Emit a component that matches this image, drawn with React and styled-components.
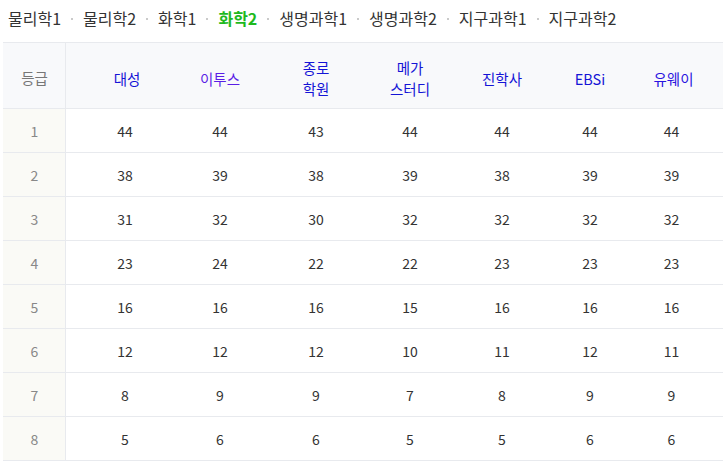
import React from "react";
import styled, { createGlobalStyle } from "styled-components";

const Global = createGlobalStyle`
  html, body { margin: 0; padding: 0; background: #fff; }
  body { font-family: "Noto Sans CJK KR", "Noto Sans", sans-serif; }
`;

const Page = styled.div`
  width: 723px;
`;

const Tabs = styled.nav`
  display: flex;
  align-items: center;
  height: 42px;
  box-sizing: border-box;
  padding: 7px 0 13px 8px;
  font-size: 16px;
  line-height: 22px;
`;

const Tab = styled.span`
  color: ${(p) => (p.$active ? "#1eb91e" : "#333")};
  font-weight: ${(p) => (p.$active ? 700 : 400)};
  white-space: nowrap;
`;

const Dot = styled.span`
  width: 2px;
  height: 2px;
  border-radius: 1px;
  background: #b8b8b8;
  margin: 2px 10px 0;
  flex: none;
`;

const Table = styled.div`
  margin-left: 3px;
  width: 720px;
  border-top: 1px solid #e8eaee;
  font-size: 14px;
`;

const cols = "63px 106px 96px 96px 92px 92px 84px 91px";

const Row = styled.div`
  display: grid;
  grid-template-columns: ${cols};
  height: ${(p) => (p.$head ? "66px" : "44px")};
  box-sizing: border-box;
  border-bottom: 1px solid #e8eaee;
  background: ${(p) => (p.$head ? "#f8f9fb" : "#fff")};
`;

const GradeCell = styled.div`
  display: flex;
  align-items: center;
  justify-content: center;
  border-right: 1px solid #e8eaee;
  background: ${(p) => (p.$head ? "#f8f9fb" : "#fafaf6")};
  color: ${(p) => (p.$head ? "#777" : "#888")};
  padding-left: 1px;
  padding-top: ${(p) => (p.$head ? "4px" : "0")};
  font-size: ${(p) => (p.$head ? "14.5px" : "14px")};
`;

const HeadCell = styled.div`
  display: flex;
  align-items: center;
  justify-content: center;
  text-align: center;
  line-height: 21px;
  font-size: 14.5px;
  color: ${(p) => p.$color || "#1414d6"};
  padding-left: ${(p) => (p.$first ? "16px" : "0")};
  padding-right: ${(p) => (p.$last ? "8px" : "0")};
  padding-top: 5px;
`;

const Cell = styled.div`
  display: flex;
  align-items: center;
  justify-content: center;
  color: #333;
  padding-left: ${(p) => (p.$first ? "12px" : "0")};
  padding-right: ${(p) => (p.$last ? "12px" : "0")};
  padding-top: 1px;
`;

const tabs = ["물리학1", "물리학2", "화학1", "화학2", "생명과학1", "생명과학2", "지구과학1", "지구과학2"];

const heads = [
  { label: ["대성"] },
  { label: ["이투스"], color: "#5a1de6" },
  { label: ["종로", "학원"] },
  { label: ["메가", "스터디"] },
  { label: ["진학사"] },
  { label: ["EBSi"] },
  { label: ["유웨이"], color: "#2a14e0" },
];

const data = [
  [44, 44, 43, 44, 44, 44, 44],
  [38, 39, 38, 39, 38, 39, 39],
  [31, 32, 30, 32, 32, 32, 32],
  [23, 24, 22, 22, 23, 23, 23],
  [16, 16, 16, 15, 16, 16, 16],
  [12, 12, 12, 10, 11, 12, 11],
  [8, 9, 9, 7, 8, 9, 9],
  [5, 6, 6, 5, 5, 6, 6],
];

export default function App() {
  return (
    <Page>
      <Global />
      <Tabs>
        {tabs.map((t, i) => (
          <React.Fragment key={t}>
            {i > 0 && <Dot />}
            <Tab $active={t === "화학2"}>{t}</Tab>
          </React.Fragment>
        ))}
      </Tabs>
      <Table>
        <Row $head>
          <GradeCell $head>등급</GradeCell>
          {heads.map((h, i) => (
            <HeadCell key={i} $color={h.color} $first={i === 0} $last={i === heads.length - 1}>
              <span>
                {h.label.map((l, j) => (
                  <React.Fragment key={j}>
                    {j > 0 && <br />}
                    {l}
                  </React.Fragment>
                ))}
              </span>
            </HeadCell>
          ))}
        </Row>
        {data.map((r, i) => (
          <Row key={i}>
            <GradeCell>{i + 1}</GradeCell>
            {r.map((v, j) => (
              <Cell key={j} $first={j === 0} $last={j === r.length - 1}>
                {v}
              </Cell>
            ))}
          </Row>
        ))}
      </Table>
    </Page>
  );
}
